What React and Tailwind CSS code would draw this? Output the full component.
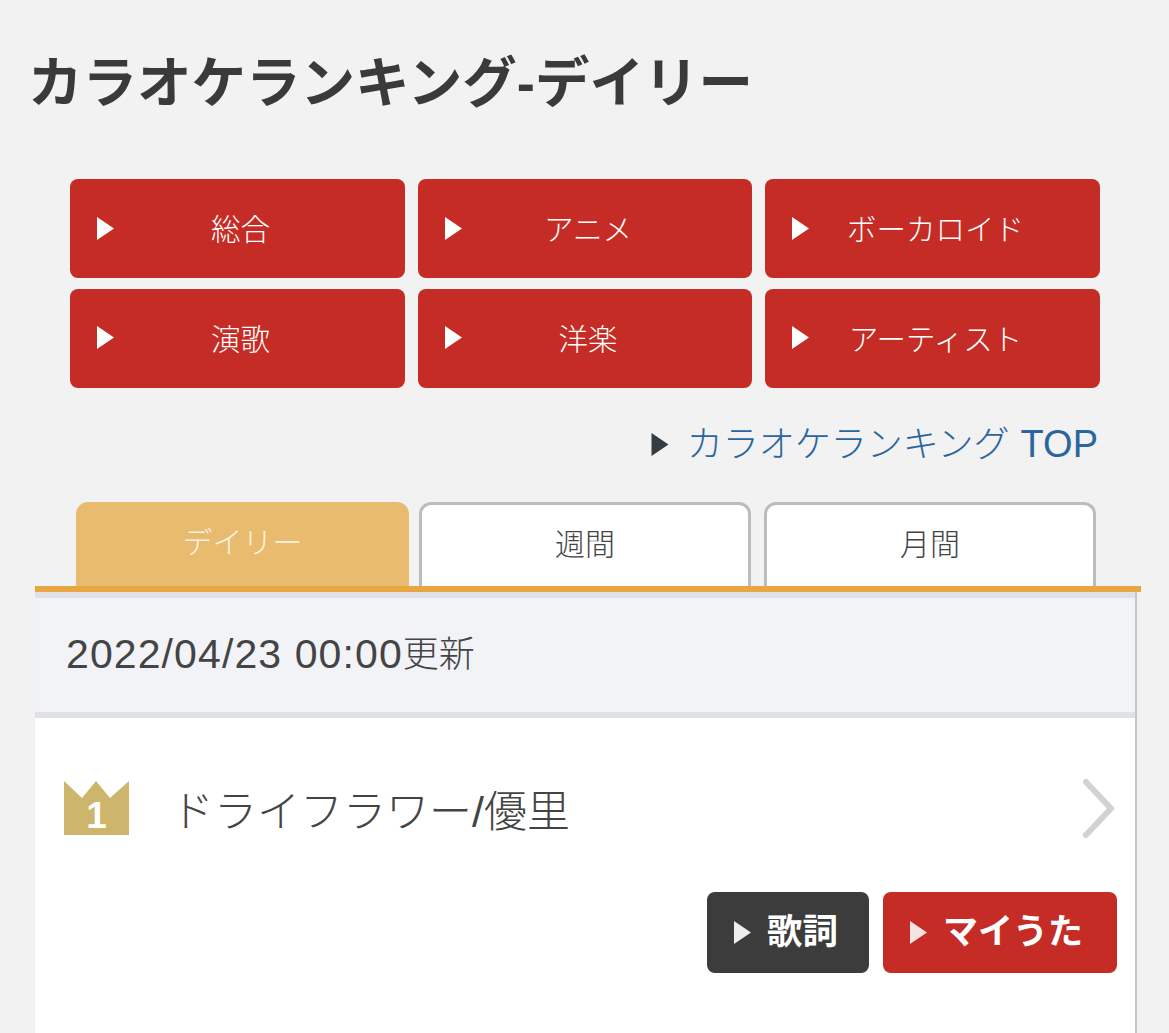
const FONT = "font-['Liberation_Sans','Noto_Sans_CJK_JP',sans-serif]";

function Tri({ color = "#fff", w = 17, h = 23, className = "" }) {
  return (
    <svg width={w} height={h} viewBox="0 0 17 23" className={"shrink-0 " + className}>
      <path d="M0 0L17 11.5L0 23Z" fill={color} />
    </svg>
  );
}

function NavButton({ label, nudge }) {
  return (
    <a className="flex items-center h-[99px] rounded-[8px] bg-[#c42c25] pl-[27px] pr-[38px] text-[29.5px] font-light text-white">
      <Tri className={nudge ? "-mt-[2px]" : ""} />
      <span className="flex-1 text-center mt-[4px]">{label}</span>
    </a>
  );
}

function Tab({ label, active, className }) {
  return (
    <div
      className={
        "h-[84px] rounded-t-[12px] flex items-center justify-center pb-[3px] text-[30px] font-light " +
        (active
          ? "bg-[#e9bb6f] text-[#fdf3e0] "
          : "bg-white border-[3px] border-b-0 border-[#bcbcbc] text-[#444444] ") +
        className
      }
    >
      {label}
    </div>
  );
}

export default function App() {
  return (
    <div className={"h-[1033px] overflow-hidden bg-[#f2f2f2] text-[#3c3c3c] " + FONT}>
      <h1 className="pt-[52px] pl-[28px] text-[54.5px] leading-[64px] h-[116px] font-bold text-[#3a3a3a] whitespace-nowrap">
        カラオケランキング-デイリー
      </h1>

      <div className="mt-[63px] ml-[70px] grid grid-cols-[335px_334px_335px] grid-rows-[99px_99px] gap-x-[13px] gap-y-[11px] w-[1030px]">
        <NavButton label="総合" />
        <NavButton label="アニメ" />
        <NavButton label="ボーカロイド" />
        <NavButton label="演歌" nudge />
        <NavButton label="洋楽" nudge />
        <NavButton label="アーティスト" nudge />
      </div>

      <div className="mt-[32px] h-[48px] pr-[71px] flex items-center justify-end">
        <Tri color="#333d42" w={18} h={23} />
        <a className="ml-[18px] text-[36px] leading-[48px] font-light text-[#2a659f] whitespace-nowrap">
          カラオケランキング
          <span className="ml-[11px] text-[38px]">TOP</span>
        </a>
      </div>

      <div className="mt-[34px] ml-[76px] flex">
        <Tab label="デイリー" active className="w-[333px]" />
        <Tab label="週間" className="ml-[10px] w-[332px]" />
        <Tab label="月間" className="ml-[13px] w-[332px]" />
      </div>

      <div className="ml-[35px] w-[1106px] h-[6px] bg-[#e8a642]" />

      <div className="ml-[35px] w-[1100px] shadow-[2px_0_0_#c6c6c6] bg-white h-[441px]">
        <div className="h-[126px] bg-[#f2f3f7] border-t-[6px] border-b-[6px] border-[#dfe1e6] pl-[31px] flex items-center font-light text-[36px] text-[#444444] whitespace-nowrap">
          <span className="text-[41px] tracking-[1.1px]">2022/04/23 00:00</span>
          <span>更新</span>
        </div>

        <div className="h-[174px] pt-[6px] pl-[29px] pr-[20px] flex items-center">
          <div className="relative w-[65px] h-[54px] shrink-0">
            <svg width="65" height="54" viewBox="0 0 65 54" className="block">
              <path d="M0 0L18 17L32 0L46 17L65 0V54H0Z" fill="#cdb66c" />
            </svg>
            <span className="absolute inset-x-0 bottom-[-3px] text-center text-[37px] leading-[44px] font-bold text-white">1</span>
          </div>
          <div className="ml-[42px] mt-[8px] flex-1 text-[43px] font-light text-[#444444] whitespace-nowrap">ドライフラワー/優里</div>
          <svg width="32" height="60" viewBox="0 0 32 60" className="shrink-0 mt-[2px]">
            <path d="M3 3L28 29.5L3 56" fill="none" stroke="#d2d2d2" strokeWidth="6" strokeLinecap="round" strokeLinejoin="round" />
          </svg>
        </div>

        <div className="flex justify-end pr-[18px] gap-[14px]">
          <a className="w-[162px] h-[81px] rounded-[8px] bg-[#3c3c3c] pl-[27px] flex items-center gap-[16px] text-[35.5px] font-bold text-white">
            <Tri color="#eeeeee" w={17} h={23} />
            <span>歌詞</span>
          </a>
          <a className="w-[234px] h-[81px] rounded-[8px] bg-[#c42c25] pl-[27px] flex items-center gap-[16px] text-[35px] font-bold text-white whitespace-nowrap">
            <Tri color="#f6e4e2" w={17} h={23} />
            <span>マイうた</span>
          </a>
        </div>
      </div>
    </div>
  );
}
